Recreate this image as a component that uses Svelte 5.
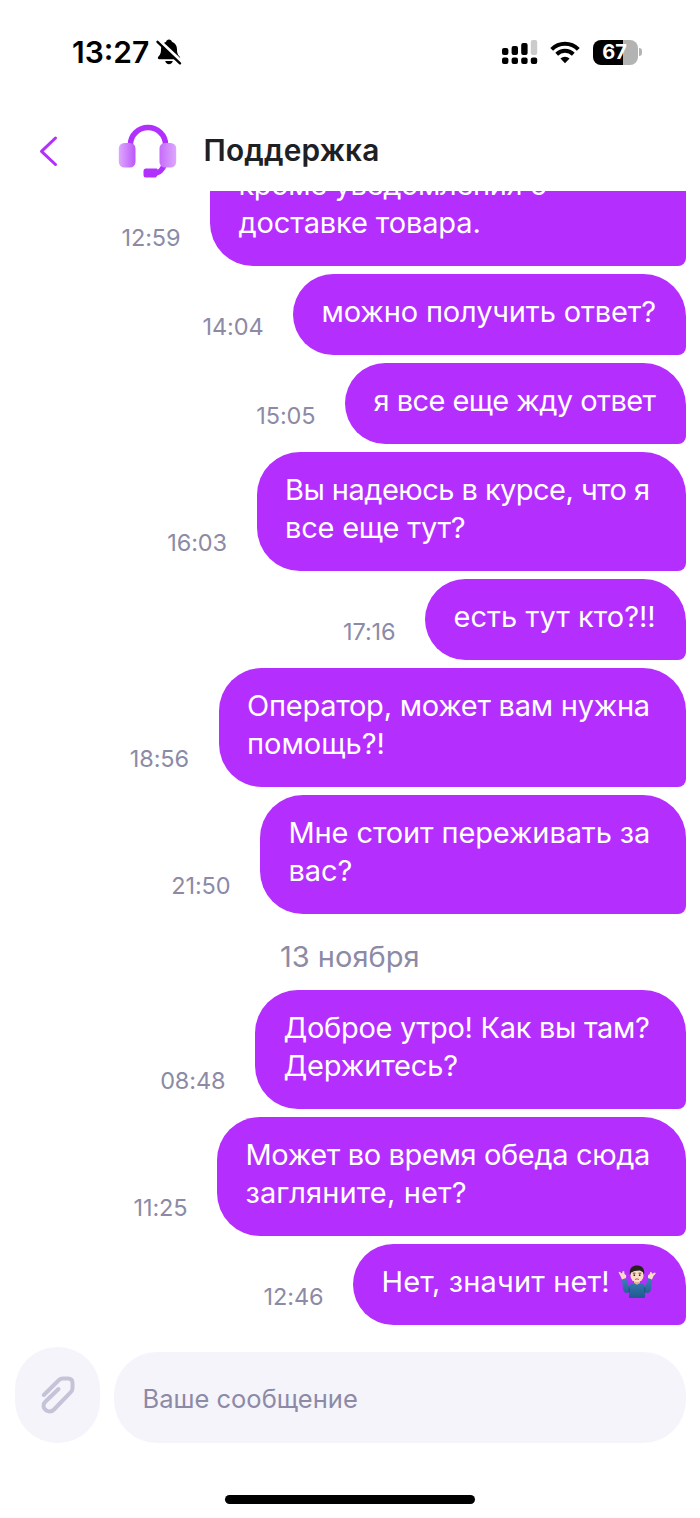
<script>
  // tracking is set line by line, in px
  const messages = [
    { time: "12:59", width: 475.5, lines: [["кроме уведомления о", -0.35], ["доставке товара.", -0.13]] },
    { time: "14:04", width: 392.5, lines: [["можно получить ответ?", -0.14]] },
    { time: "15:05", width: 340.5, lines: [["я все еще жду ответ", -0.55]] },
    { time: "16:03", width: 429, lines: [["Вы надеюсь в курсе, что я", -0.54], ["все еще тут?", -0.22]] },
    { time: "17:16", width: 260.5, lines: [["есть тут кто?!!", 0.03]] },
    { time: "18:56", width: 467, lines: [["Оператор, может вам нужна", -0.25], ["помощь?!", 0]] },
    { time: "21:50", width: 425.5, lines: [["Мне стоит переживать за", -0.12], ["вас?", -0.1]] },
    { date: "13 ноября" },
    { time: "08:48", width: 430.5, lines: [["Доброе утро! Как вы там?", -0.3], ["Держитесь?", -0.15]] },
    { time: "11:25", width: 468.5, lines: [["Может во время обеда сюда", -0.36], ["загляните, нет?", 0.13]] },
    { time: "12:46", width: 332.5, lines: [["Нет, значит нет!", 0.14]], shrug: true },
  ];

  const signal = [7, 9, 12];
</script>

<div class="screen">
  <div class="status">
    <span class="clock">13:27</span>
    <svg class="bell" width="28" height="28" viewBox="0 0 28 28">
      <path
        d="M14 1.500c-1.600 0-2.600 1-2.900 2.200C7.700 5 6 7.800 6 11.200c0 4.300-1 5.600-2.600 7.300-1.100 1.200-.6 2.800 1 2.800h19.200c1.600 0 2.100-1.600 1-2.800-1.600-1.700-2.600-3-2.600-7.300 0-3.400-1.700-6.200-5.100-7.500C16.600 2.500 15.600 1.500 14 1.500z"
      />
      <path d="M10.200 23h7.600c-.4 2-1.900 3.200-3.800 3.200S10.600 25 10.200 23z" />
      <path d="M3.500 2.500 26.500 24" stroke="#fff" stroke-width="4" />
      <path d="M2.500 3.800 25 25.300" stroke="#000" stroke-width="2.400" stroke-linecap="round" />
    </svg>
    <svg class="signal" width="36" height="26" viewBox="0 0 36 26">
      {#each signal as height, i}
        <rect x={i * 9.6} y={16 - height} width="6.4" {height} rx="2" />
      {/each}
      <rect x="28.8" y="1" width="6.4" height="15" rx="2" fill="#cbcbcb" />
      {#each [0, 1, 2, 3] as i}
        <rect x={i * 9.6} y="18.5" width="6.4" height="6.4" rx="2" />
      {/each}
    </svg>
    <svg class="wifi" width="30" height="23" viewBox="0 0 30 23">
      <path d="M1.700 8.300a18.800 18.800 0 0 1 26.600 0" class="arc" />
      <path d="M6.700 13.200a12 12 0 0 1 16.600 0" class="arc" />
      <path d="M15 22.300l-4.600-4.700a6.700 6.700 0 0 1 9.200 0z" />
    </svg>
    <div class="battery"><span>67</span></div>
    <i class="battery-tip"></i>
  </div>

  <header>
    <svg class="back" width="20" height="32" viewBox="0 0 20 32">
      <path d="M16.500 3 2.500 16.300 16.500 29.500" />
    </svg>
    <svg class="headset" width="60" height="56" viewBox="0 0 60 56">
      <defs>
        <linearGradient id="ear-left">
          <stop offset="0" stop-color="#dda9fc" />
          <stop offset="1" stop-color="#bd56fa" />
        </linearGradient>
        <linearGradient id="ear-right">
          <stop offset="0" stop-color="#c66afc" />
          <stop offset="1" stop-color="#dda8fd" />
        </linearGradient>
      </defs>
      <path d="M12.500 23V20.500a17.500 17 0 0 1 35 0V23" class="band" />
      <path d="M46.500 40c-1.500 5-5 9-9.500 9" class="band" />
      <path d="M28 44.500h11l2 4-3 5H28q-2.500 0-2.500-2.500v-4q0-2.500 2.500-2.500z" fill="#b230fe" />
      <rect x="0.800" y="19" width="16.700" height="24.500" rx="5.500" fill="url(#ear-left)" />
      <rect x="41.500" y="19" width="16.700" height="24.500" rx="5.500" fill="url(#ear-right)" />
    </svg>
    <h1>Поддержка</h1>
  </header>

  <main>
    {#each messages as message}
      {#if message.date}
        <div class="date">{message.date}</div>
      {:else}
        <div class="row">
          <time>{message.time}</time>
          <div class="bubble" class:single={message.lines.length === 1} style:width="{message.width}px">
            {#each message.lines as [line, tracking]}
              <p>
                <span style:letter-spacing="{tracking}px">{line}</span>
                {#if message.shrug}
                  <svg class="shrug" width="38" height="34" viewBox="0 0 38 34">
                    <defs>
                      <linearGradient id="shirt" x2="0" y2="1">
                        <stop offset="0" stop-color="#3a80b8" />
                        <stop offset="1" stop-color="#205a8e" />
                      </linearGradient>
                    </defs>
                    <path
                      d="M4 14.500 8 13l2.500 8q2-2.500 6-3.500h5q4 1 6 3.500L30 13l4 1.500-1 9.500c-.4 4-3.500 5-6 3V33H11v-6c-2.500 2-5.600 1-6-3z"
                      fill="url(#shirt)"
                    />
                    <path d="M11 27.500l.3-5M27 27.500l-.3-5" stroke="#184970" stroke-width="0.800" />
                    <path
                      d="M4 14.500 2.500 11 .5 7.500l1-.7L4 8.500 4.800 6l1.400.3L6.500 9l1.700 1.300L8 13zM34 14.500 35.500 11l2.300-2.500-.8-1L34 8.700 33.500 7l-1.400.2L31.800 9 30 10.300V13z"
                      fill="#fadcc3"
                    />
                    <path d="M16 14h6v4l-3 1.700-3-1.700z" fill="#e2b592" />
                    <rect x="12.500" y="3" width="13" height="14" rx="6" fill="#fbdcc4" />
                    <path d="M12 10C11 4 13.500.5 19 .5S27 4 26 10l-1.200-3-3-1.500-5.300.5-3.300 1.500z" fill="#29211f" />
                    <path d="M14.700 8.200h2.800M20.500 8.200h2.800" stroke="#3a2822" stroke-width="0.800" />
                    <circle cx="16.300" cy="10.200" r=".9" fill="#3a2822" />
                    <circle cx="21.700" cy="10.200" r=".9" fill="#3a2822" />
                    <path d="M17 14.500q2-1.300 4 0" stroke="#b95f50" fill="none" />
                  </svg>
                {/if}
              </p>
            {/each}
          </div>
        </div>
      {/if}
    {/each}
  </main>

  <footer>
    <div class="attach">
      <svg width="38" height="42" viewBox="0 0 38 42">
        <path d="M5.800 21 21 6Q22.500 4.500 25 4.500H30q4.500 0 4.500 4.500v5q0 2.500-1.700 4.200L16 35.500c-5.500 5.500-14.500-2-8.500-8L20.500 15" />
      </svg>
    </div>
    <div class="input">Ваше сообщение</div>
  </footer>
  <div class="home"></div>
</div>

<style>
  :global(body) {
    background: #fff;
  }

  .screen {
    width: 700px;
    height: 1518px;
    display: flex;
    flex-direction: column;
    overflow: hidden;
    background: #fff;
    font-family: Inter, "Liberation Sans", sans-serif;
  }

  .status {
    height: 104px;
    box-sizing: border-box;
    padding-left: 72px;
    display: flex;
    align-items: center;
    flex-shrink: 0;
  }

  .clock {
    width: 83px;
    font-size: 30px;
    font-weight: 600;
  }

  .signal {
    margin-left: 319px;
  }

  .wifi {
    margin-left: 12px;
  }

  .arc {
    fill: none;
    stroke: #000;
    stroke-width: 4;
  }

  .battery {
    width: 45px;
    height: 25px;
    margin-left: 13px;
    border-radius: 8px;
    background: linear-gradient(to right, #000 67%, #b3b3b3 67%);
    color: #fff;
    font-size: 20px;
    font-weight: 700;
    line-height: 25px;
    text-align: center;
    text-indent: -2px;
  }

  .battery-tip {
    width: 3px;
    height: 8px;
    margin-left: 1px;
    border-radius: 0 4px 4px 0;
    background: #b3b3b3;
  }

  header {
    height: 86.5px;
    box-sizing: border-box;
    padding: 7px 0 0 39px;
    display: flex;
    align-items: flex-start;
    flex-shrink: 0;
  }

  .back {
    margin-top: 24px;
    fill: none;
    stroke: #b22ffd;
    stroke-width: 3;
    stroke-linecap: round;
    stroke-linejoin: round;
  }

  .headset {
    margin: 13px 0 0 59px;
  }

  .band {
    fill: none;
    stroke: #b230fe;
    stroke-width: 5.5;
  }

  h1 {
    margin: 20px 0 0 25.5px;
    color: #1f2024;
    font-size: 29.8px;
    font-weight: 600;
    line-height: 38px;
    letter-spacing: 0.2px;
  }

  main {
    height: 1134.9px;
    padding-right: 14.5px;
    display: flex;
    flex-direction: column;
    justify-content: flex-end;
    gap: 7.5px;
    overflow: hidden;
    flex-shrink: 0;
  }

  .row {
    display: flex;
    justify-content: flex-end;
    align-items: flex-end;
    flex-shrink: 0;
  }

  time {
    margin: 0 29.5px 13px 0;
    color: #8c8aa6;
    font-size: 23.5px;
    line-height: 30px;
    letter-spacing: -0.1px;
  }

  .bubble {
    box-sizing: border-box;
    padding: 19px 0 24.5px 28.5px;
    border-radius: 43px 43px 8px 43px;
    background: #b42efe;
    color: #fff;
    font-size: 29px;
    line-height: 38px;
    white-space: nowrap;
  }

  .bubble.single {
    border-radius: 41px 43px 8px 41px;
  }

  p {
    height: 38px;
    margin: 0;
    display: flex;
    align-items: center;
  }

  .shrug {
    margin-left: 8px;
  }

  .date {
    height: 60.5px;
    color: #8c8aa6;
    font-size: 29px;
    line-height: 70px;
    text-align: center;
    flex-shrink: 0;
    padding-left: 14px;
  }

  footer {
    padding: 21.6px 14.5px 0;
    display: flex;
    align-items: flex-end;
    gap: 14.5px;
    flex-shrink: 0;
  }

  .attach {
    width: 85px;
    height: 96px;
    border-radius: 42px;
    background: #f5f4fa;
    display: flex;
    align-items: center;
    justify-content: center;
  }

  .attach svg {
    fill: none;
    stroke: #c5c3d8;
    stroke-width: 4;
    stroke-linecap: round;
    stroke-linejoin: round;
  }

  .input {
    flex: 1;
    height: 91px;
    padding-left: 28.5px;
    border-radius: 43px;
    background: #f5f4fa;
    color: #8c8aa6;
    font-size: 25.5px;
    line-height: 93px;
  }

  .home {
    width: 250px;
    height: 9px;
    margin: 52px auto 0;
    border-radius: 5px;
    background: #000;
    flex-shrink: 0;
  }
</style>
